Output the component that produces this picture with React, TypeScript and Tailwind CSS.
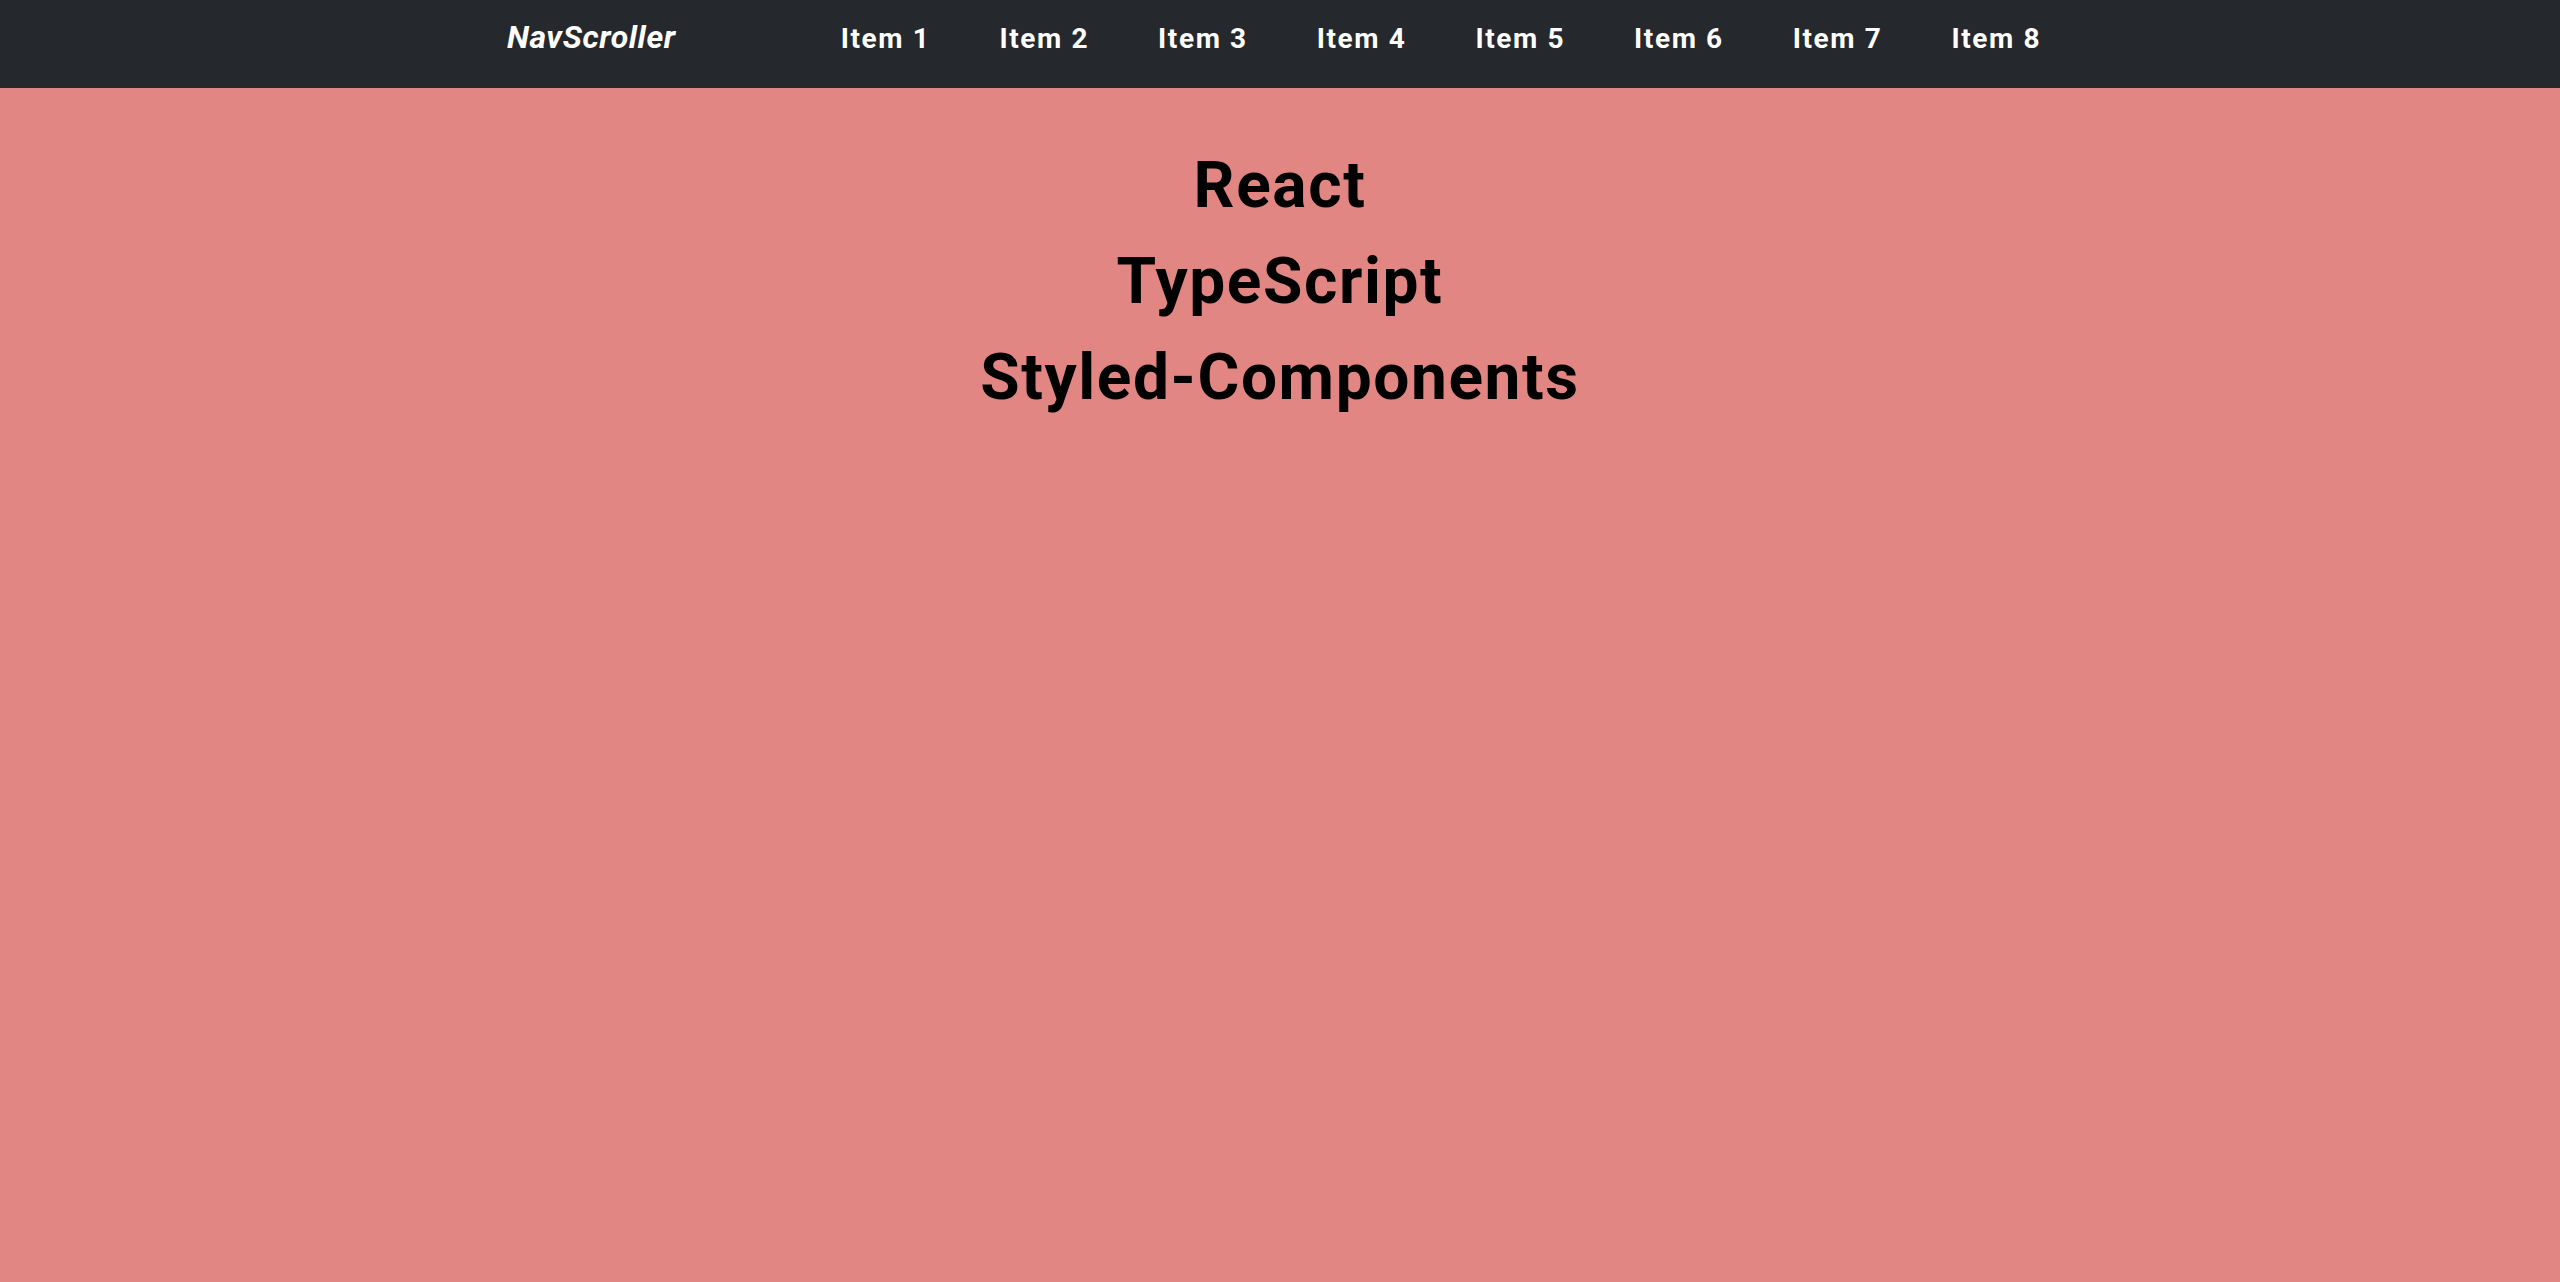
import React from 'react';

const items = ['Item 1', 'Item 2', 'Item 3', 'Item 4', 'Item 5', 'Item 6', 'Item 7', 'Item 8'];
const stack = ['React', 'TypeScript', 'Styled-Components'];

export default function App() {
  return (
    <div className="min-h-screen w-full bg-[#e28683] font-['Roboto',sans-serif]">
      {/* Barre de navigation */}
      <nav className="h-[88px] w-full bg-[#25282d]">
        <div className="flex items-baseline justify-center pt-[13px] pr-[12px]">
          <span className="text-[32px] font-bold italic leading-[48px] tracking-[0.6px] text-white">NavScroller</span>
          <ul className="ml-[165px] flex gap-[69px]">
            {items.map(item => (
              <li key={item} className="text-[28px] font-bold leading-[42px] tracking-[1.6px] text-white">
                {item}
              </li>
            ))}
          </ul>
        </div>
      </nav>

      {/* Contenu */}
      <main className="flex flex-col items-center pt-[50px]">
        {stack.map(name => (
          <h1 key={name} className="text-[64px] font-bold leading-[96px] tracking-[1.6px] text-black">
            {name}
          </h1>
        ))}
      </main>
    </div>
  );
}
